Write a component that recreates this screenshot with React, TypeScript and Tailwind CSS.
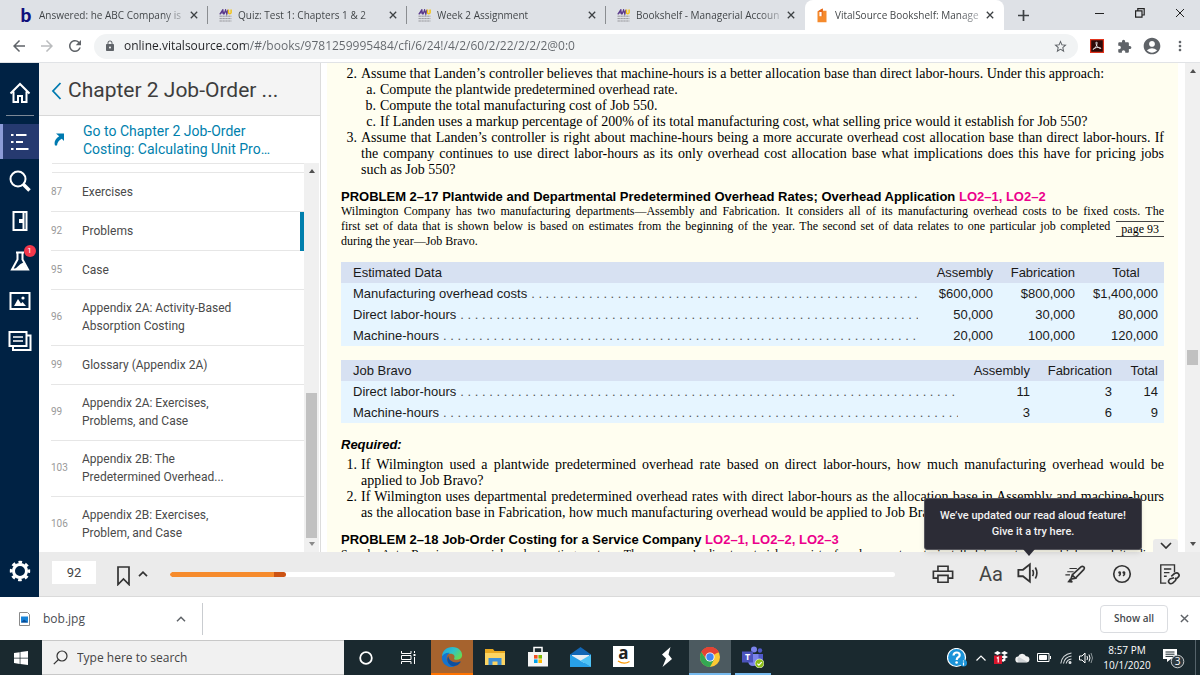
import type { ReactNode } from "react";
import {
  MdArrowBack,
  MdArrowForward,
  MdRefresh,
  MdLock,
  MdStarBorder,
  MdExtension,
  MdAccountCircle,
  MdMoreVert,
} from "react-icons/md";

/* ---------- Browser chrome ---------- */

function CrossIcon({ className }: { className: string }) {
  return (
    <svg viewBox="0 0 10 10" className={className} fill="none" stroke="currentColor" strokeWidth="1.6">
      <path d="M1 1l8 8M9 1l-8 8" />
    </svg>
  );
}

function BrandB() {
  return (
    <span className="font-['Lato'] text-[19px] leading-[18px] font-black text-[#10107c]" aria-hidden="true">
      b
    </span>
  );
}

function UniversityIcon() {
  return (
    <svg viewBox="0 0 13 13" className="h-[13px] w-[13px]" fill="none">
      <path d="M.8 5.300 3.800.8l.8 4.500M1.800 3.800h2.800M5 5.300 6.600 1l1.200 4L9 .8" stroke="#5b3a8c" strokeWidth="1.300" />
      <path d="M9.500.4v3.200q0 1.200 1.200 1.200t1.400-1.200V.4" stroke="#f2c318" strokeWidth="1.500" />
      <path d="M.5 7.200h12M.5 9.600h12M.5 12h12" stroke="#97979c" strokeWidth="1" strokeDasharray="2.400 .5" />
    </svg>
  );
}

function BookshelfIcon() {
  return (
    <svg viewBox="0 0 10 15" className="h-[15px] w-[10px]">
      <path d="M.5 3.400 5 .8h1v2h3.500v11.500h-9z" fill="#f58a2c" />
      <path d="M.5 3.400 5.600.6v8L2.800 7.200V3.600z" fill="#e2631b" />
      <path d="M2.400 4h2.200v4.200H2.400z" fill="#fff" />
    </svg>
  );
}

const tabs = [
  { title: "Answered: he ABC Company is", icon: <BrandB />, divider: true },
  { title: "Quiz: Test 1: Chapters 1 & 2", icon: <UniversityIcon />, divider: true },
  { title: "Week 2 Assignment", icon: <UniversityIcon />, divider: true },
  { title: "Bookshelf - Managerial Accoun", icon: <UniversityIcon />, divider: false },
  { title: "VitalSource Bookshelf: Manage", icon: <BookshelfIcon />, active: true, divider: false },
];

function TabStrip() {
  return (
    <div className="flex h-[30px] shrink-0 items-stretch bg-[#dee1e6] pl-[9px]">
      {tabs.map((tab) => (
        <div
          key={tab.title}
          className={
            tab.active
              ? "relative flex w-[199px] shrink-0 items-center rounded-t-lg bg-white px-2.5"
              : "relative flex w-[199px] shrink-0 items-center px-2.5"
          }
        >
          <span className="flex w-3.5 shrink-0 justify-center">{tab.icon}</span>
          <button className="ml-1.5 min-w-0 flex-1 overflow-hidden bg-gradient-to-r from-[#3c4043] from-85% to-[#b9bcc1] bg-clip-text text-left text-[10px] whitespace-nowrap text-transparent">
            {tab.title}
          </button>
          <button aria-label="Close tab" className="ml-1.5 shrink-0 text-[#3c4043]">
            <CrossIcon className="h-2 w-2" />
          </button>
          {tab.divider && <span className="absolute right-0 h-[18px] w-px bg-[#8a8d91]" />}
        </div>
      ))}
      <button aria-label="New tab" className="ml-[14px] text-[#3c4043]">
        <svg viewBox="0 0 11 11" className="h-[11px] w-[11px]" stroke="currentColor" strokeWidth="1.700">
          <path d="M5.500 0v11M0 5.500h11" />
        </svg>
      </button>
      <div className="mr-[15px] ml-auto flex items-center gap-[30px] pb-1 text-[#222]">
        <button aria-label="Minimize">
          <svg viewBox="0 0 10 10" className="h-2.5 w-2.5" stroke="currentColor">
            <path d="M0 5.500h9" />
          </svg>
        </button>
        <button aria-label="Restore">
          <svg viewBox="0 0 10 10" className="h-2.5 w-2.5" fill="none" stroke="currentColor" strokeWidth="1.200">
            <path d="M.6 2.800h6.400v6.400H.6zM2.800 2.600V.6h6.400V7H7.200" />
          </svg>
        </button>
        <button aria-label="Close">
          <CrossIcon className="h-2.5 w-2.5 stroke-1" />
        </button>
      </div>
    </div>
  );
}

function AcrobatIcon() {
  return (
    <svg viewBox="0 0 14 14" className="h-[14px] w-[14px]" fill="none">
      <path d="M.6.6h12.800v12.800H.6z" fill="#2d0a08" stroke="#e2341d" strokeWidth="1.200" />
      <path
        d="M6.400 3c1.400-.3.6 3.200-.9 5.400-1 1.600-2.200 2.500-2.400 1.900-.2-.8 2.800-1.900 5.200-1.900 1.800 0 2.900.5 2.400 1.100-.9.6-3.400-1.600-4.200-3.400C5.900 4.700 5.800 3.200 6.400 3z"
        stroke="#fff"
        strokeWidth=".8"
      />
    </svg>
  );
}

function AddressBar() {
  return (
    <div className="flex h-[33px] shrink-0 items-center border-b border-[#e1e3e6] bg-white pr-3">
      <button aria-label="Back" className="ml-[10px] text-[#5f6368]">
        <MdArrowBack className="h-[18px] w-[18px]" />
      </button>
      <button aria-label="Forward" className="ml-[10px] text-[#babcbe]">
        <MdArrowForward className="h-[18px] w-[18px]" />
      </button>
      <button aria-label="Reload" className="ml-[10px] text-[#5f6368]">
        <MdRefresh className="h-[18px] w-[18px]" />
      </button>
      <div className="mr-3 ml-[10px] flex h-[25px] flex-1 items-center rounded-full bg-[#f1f3f4] pr-2.5 pl-2.5">
        <MdLock className="h-3 w-3 text-[#5f6368]" />
        <input
          aria-label="Address"
          defaultValue="online.vitalsource.com/#/books/9781259995484/cfi/6/24!/4/2/60/2/22/2/2/2@0:0"
          className="ml-2 flex-1 bg-gradient-to-r from-[#202124] from-[121px] to-[#62666b] to-[121px] bg-clip-text text-xs text-transparent outline-none"
        />
        <button aria-label="Bookmark this page" className="text-[#5f6368]">
          <MdStarBorder className="h-[15px] w-[15px]" />
        </button>
      </div>
      <button aria-label="Adobe Acrobat">
        <AcrobatIcon />
      </button>
      <button aria-label="Extensions" className="ml-[13px] text-[#5f6368]">
        <MdExtension className="h-[15px] w-[15px]" />
      </button>
      <button aria-label="Profile" className="ml-[10px] text-[#5f6368]">
        <MdAccountCircle className="h-5 w-5" />
      </button>
      <button aria-label="Menu" className="ml-2.5 text-[#5f6368]">
        <MdMoreVert className="h-4 w-4" />
      </button>
    </div>
  );
}

/* ---------- Left icon rail ---------- */

function RailIcon({ children, className = "h-6 w-6" }: { children: ReactNode; className?: string }) {
  return (
    <svg viewBox="0 0 24 24" className={className} fill="none" stroke="#fff" strokeWidth="2">
      {children}
    </svg>
  );
}

function Rail() {
  return (
    <nav aria-label="Reader" className="flex w-[39px] shrink-0 flex-col items-center bg-[#002244]">
      <button aria-label="Home" className="mt-[18px]">
        <RailIcon>
          <path d="M2.500 12.500 12 3l9.500 9.500M5.500 10.500v10.500h4.500v-6h4v6h4.500V10.500" />
        </RailIcon>
      </button>
      <span className="mt-[10px] h-px w-7 bg-[#7c8896]" />
      <button
        aria-label="Table of contents"
        className="mt-2 flex h-[35px] w-full items-center justify-center border-l-3 border-[#8c9bd8] bg-[#263a70] pr-0.5"
      >
        <RailIcon>
          <path d="M8 5h10.500M8 12h7M8 19h12.500M3 5h2.500M3 12h2.500M3 19h2.500" />
        </RailIcon>
      </button>
      <button aria-label="Search" className="mt-[10px]">
        <RailIcon>
          <circle cx="10" cy="10" r="7.500" />
          <path d="m15 15 6.500 6.500" strokeWidth="3.500" />
        </RailIcon>
      </button>
      <button aria-label="Notebook" className="mt-4">
        <RailIcon>
          <path d="M5.500 3h13v18h-13zM15.500 3v18" />
          <path d="M11 12h5" strokeWidth="4" />
        </RailIcon>
      </button>
      <button aria-label="Study tools" className="relative mt-4">
        <RailIcon>
          <path d="M8 3.500h8M9.500 4v6.500L4 20.500h16L14.500 10.500V4" />
          <path d="m7 20 5.500-5 3-1.500 4 7z" fill="#fff" stroke="none" />
        </RailIcon>
        <span className="absolute -top-1 left-4 flex h-3 w-3 items-center justify-center rounded-full bg-[#f4374b] font-['Roboto'] text-[8px] text-white">
          1
        </span>
      </button>
      <button aria-label="Figures" className="mt-4">
        <RailIcon>
          <path d="M2.500 4h19v16h-19z" />
          <path d="m6 17 4-7 3 4.500 1.500-1.500 3.500 4z" fill="#fff" stroke="none" />
          <circle cx="15" cy="9" r="1.600" fill="#fff" stroke="none" />
        </RailIcon>
      </button>
      <button aria-label="Flashcards" className="mt-4">
        <RailIcon>
          <path d="M1.500 3h17v14h-17zM19 6.500h3.500V21H5v-3.500" />
          <path d="M5 8h10M5 12h10" strokeWidth="1.400" />
        </RailIcon>
      </button>
      <button aria-label="Settings" className="mt-auto mb-[14px]">
        <RailIcon>
          <circle cx="12" cy="12" r="6.500" strokeWidth="3" />
          <circle cx="12" cy="12" r="8.800" strokeWidth="2.800" strokeDasharray="3.600 3.311" strokeDashoffset="1.800" />
        </RailIcon>
      </button>
    </nav>
  );
}

/* ---------- Contents panel ---------- */

const chapters = [
  { page: 87, title: "Exercises" },
  { page: 92, title: "Problems", current: true },
  { page: 95, title: "Case" },
  { page: 96, title: "Appendix 2A: Activity-Based Absorption Costing" },
  { page: 99, title: "Glossary (Appendix 2A)" },
  { page: 99, title: "Appendix 2A: Exercises, Problems, and Case" },
  { page: 103, title: "Appendix 2B: The Predetermined Overhead..." },
  { page: 106, title: "Appendix 2B: Exercises, Problem, and Case" },
];

function Contents() {
  return (
    <aside className="flex w-[282px] shrink-0 flex-col border-r border-[#dcdcdc] bg-white font-['Roboto'] text-[#4a4a4a]">
      <div className="flex h-[53px] shrink-0 items-center border-b border-[#d8d8d8] bg-[#f4f4f4] pt-[3px] pl-3">
        <button aria-label="Back" className="mr-1.5">
          <svg viewBox="0 0 10 18" className="h-[18px] w-[11px]" fill="none" stroke="#007ab0" strokeWidth="1.800">
            <path d="M9 1 1.500 9 9 17" />
          </svg>
        </button>
        <h1 className="text-[21px] whitespace-nowrap text-[#3d3d3d]">Chapter 2 Job-Order ...</h1>
      </div>
      <a href="#chapter-2" className="flex h-[47px] shrink-0 items-center pl-[15px] text-sm leading-[18px] text-[#007fad]">
        <svg viewBox="0 0 10 13" className="mr-[19px] h-[13px] w-[10px] shrink-0" fill="#007ab0">
          <path d="M2 .5h8v7.500L7.800 5.800Q3.500 8 3 12.500H1Q-.8 7 5.200 3.200z" />
        </svg>
        <span>
          Go to Chapter 2 Job-Order
          <br />
          Costing: Calculating Unit Pro…
        </span>
      </a>
      <div className="flex min-h-0 flex-1">
        <ul className="flex-1 overflow-hidden">
          <li className="ml-[13px] h-[10px] border-y border-[#e6e6e6]" />
          {chapters.map((c) => (
            <li key={c.title} className={c.current ? "flex border-r-4 border-[#007fad]" : "flex"}>
              <a
                href={"#page-" + c.page}
                className="ml-3 flex min-h-[39px] flex-1 items-center border-b border-[#e6e6e6] pt-[9px] pb-2.5 text-xs leading-[18px]"
              >
                <span className="w-[31px] text-[10px] text-[#999]">{c.page}</span>
                <span className="w-[160px]">{c.title}</span>
              </a>
            </li>
          ))}
        </ul>
        <div className="flex w-[15px] flex-col items-center bg-[#f0f0f0] py-1.5">
          <svg viewBox="0 0 6 4" className="h-1 w-1.5 shrink-0" fill="#505050">
            <path d="M0 4 3 0l3 4z" />
          </svg>
          <span className="mt-auto h-[145px] w-[11px] bg-[#c1c1c1]" />
          <svg viewBox="0 0 6 4" className="mt-1 h-1 w-1.5 shrink-0" fill="#8a8a8a">
            <path d="M0 0l3 4 3-4z" />
          </svg>
        </div>
        <span className="w-px" />
      </div>
    </aside>
  );
}

/* ---------- Book page ---------- */

function Item({ label, nested, children }: { label: string; nested?: boolean; children: ReactNode }) {
  return (
    <li className="flex gap-1">
      <span className={nested ? "w-[15px] shrink-0 text-right" : "w-4 shrink-0 text-right"}>{label}</span>
      <div className="flex-1 text-justify">{children}</div>
    </li>
  );
}

function ProblemHeading({ title, objectives }: { title: string; objectives: string }) {
  return (
    <h2 className="mt-[11px] font-['Liberation_Sans'] text-[13px] leading-[15px] font-bold">
      {title} <span className="text-[#ec008c]">{objectives}</span>
    </h2>
  );
}

function FullLine({ children }: { children: ReactNode }) {
  return <span className="block flex-1 [text-align-last:justify]">{children}</span>;
}

type Row = { label: string; dots: number; values: string[] };

function DataTable({
  head,
  rows,
  widths,
  lastHead,
}: {
  head: string[];
  rows: Row[];
  widths: string[];
  lastHead: string;
}) {
  return (
    <table className="w-full table-fixed font-['Liberation_Sans'] text-[13px] leading-[21px] text-[#1a1a1a]">
      <thead className="bg-[#d7e1f2]">
        <tr>
          <th scope="col" className="pl-3 text-left font-normal">
            {head[0]}
          </th>
          {head.slice(1).map((h, i) => (
            <th
              key={h}
              scope="col"
              className={i === 2 ? `${widths[i]} ${lastHead} pr-1.5 font-normal` : `${widths[i]} text-right font-normal`}
            >
              {h}
            </th>
          ))}
        </tr>
      </thead>
      <tbody className="bg-[#e6f5ff]">
        {rows.map((r) => (
          <tr key={r.label}>
            <th scope="row" className="pl-3 text-left font-normal">
              <div className="flex gap-1 overflow-hidden whitespace-nowrap">
                {r.label}
                <span aria-hidden="true" className="min-w-0 flex-1 text-[#555]">
                  {". ".repeat(r.dots)}
                </span>
              </div>
            </th>
            {r.values.map((v, i) => (
              <td key={i} className={i === 2 ? "pr-1.5 text-right" : "text-right"}>
                {v}
              </td>
            ))}
          </tr>
        ))}
      </tbody>
    </table>
  );
}

function BookPage() {
  return (
    <article className="min-w-0 flex-1 overflow-hidden bg-[#fffef0] px-[14px] pt-[3px] font-['Liberation_Serif'] text-sm leading-4 text-black">
      <ol>
        <Item label="2.">
          Assume that Landen’s controller believes that machine-hours is a better allocation base than direct
          labor-hours. Under this approach:
          <ol>
            <Item nested label="a.">
              Compute the plantwide predetermined overhead rate.
            </Item>
            <Item nested label="b.">
              Compute the total manufacturing cost of Job 550.
            </Item>
            <Item nested label="c.">
              If Landen uses a markup percentage of 200% of its total manufacturing cost, what selling price would it
              establish for Job 550?
            </Item>
          </ol>
        </Item>
        <Item label="3.">
          Assume that Landen’s controller is right about machine-hours being a more accurate overhead cost allocation
          base than direct labor-hours. If the company continues to use direct labor-hours as its only overhead cost
          allocation base what implications does this have for pricing jobs such&nbsp;as&nbsp;Job&nbsp;550?
        </Item>
      </ol>

      <ProblemHeading
        title="PROBLEM 2–17 Plantwide and Departmental Predetermined Overhead Rates; Overhead Application"
        objectives="LO2–1, LO2–2"
      />
      <div className="text-xs leading-[15px]">
        <FullLine>
          Wilmington Company has two manufacturing departments—Assembly and Fabrication. It considers all of its
          manufacturing overhead costs to be fixed costs. The
        </FullLine>
        <div className="flex h-[15px] items-start gap-1.5">
          <FullLine>
            first set of data that is shown below is based on estimates from the beginning of the year. The second set of
            data relates to one particular job completed
          </FullLine>
          <span className="mt-0.5 border-y border-[#444] px-[5px] leading-[14px]">page 93</span>
        </div>
        during the year—Job Bravo.
      </div>

      <div className="mt-[13px] flex flex-col gap-[14px]">
        <DataTable
          head={["Estimated Data", "Assembly", "Fabrication", "Total"]}
          widths={["w-[75px]", "w-[82px]", "w-[89px]"]}
          lastHead="pl-[19px] text-center"
          rows={[
            { label: "Manufacturing overhead costs", dots: 54, values: ["$600,000", "$800,000", "$1,400,000"] },
            { label: "Direct labor-hours", dots: 64, values: ["50,000", "30,000", "80,000"] },
            { label: "Machine-hours", dots: 66, values: ["20,000", "100,000", "120,000"] },
          ]}
        />
        <DataTable
          head={["Job Bravo", "Assembly", "Fabrication", "Total"]}
          widths={["w-[72px]", "w-[82px]", "w-[52px]"]}
          lastHead="text-right"
          rows={[
            { label: "Direct labor-hours", dots: 69, values: ["11", "3", "14"] },
            { label: "Machine-hours", dots: 72, values: ["3", "6", "9"] },
          ]}
        />
      </div>

      <h3 className="mt-[14px] mb-[5px] font-['Liberation_Sans'] text-[13px] leading-[15px] font-bold italic">
        Required:
      </h3>
      <ol>
        <Item label="1.">
          If Wilmington used a plantwide predetermined overhead rate based on direct labor-hours, how much manufacturing
          overhead would be applied&nbsp;to&nbsp;Job&nbsp;Bravo?
        </Item>
        <Item label="2.">
          If Wilmington uses departmental predetermined overhead rates with direct labor-hours as the allocation base in
          Assembly and machine-hours as the allocation base in Fabrication, how much manufacturing overhead would be
          applied to Job Bravo?
        </Item>
      </ol>
      <ProblemHeading title="PROBLEM 2–18 Job-Order Costing for a Service Company" objectives="LO2–1, LO2–2, LO2–3" />
      <div className="text-xs leading-[15px]">
        <FullLine>
          Speedy Auto Repairs uses a job-order costing system. The company’s direct materials consist of replacement
          parts installed in customer vehicles, and its direct
        </FullLine>
      </div>
    </article>
  );
}

function PageScrollbar() {
  return (
    <div className="ml-[7px] flex w-[15px] shrink-0 flex-col items-center bg-[#f0f0f0] py-1.5">
      <svg viewBox="0 0 6 4" className="h-1 w-1.5" fill="#505050">
        <path d="M0 4 3 0l3 4z" />
      </svg>
      <span className="h-[277px]" />
      <span className="h-[15px] w-[11px] bg-[#c1c1c1]" />
      <svg viewBox="0 0 6 4" className="mt-auto h-1 w-1.5" fill="#505050">
        <path d="M0 0l3 4 3-4z" />
      </svg>
    </div>
  );
}

/* ---------- Reader footer ---------- */

function ToolIcon({ children }: { children: ReactNode }) {
  return (
    <svg viewBox="0 0 24 24" className="h-[22px] w-[22px]" fill="none" stroke="#333" strokeWidth="1.800">
      {children}
    </svg>
  );
}

function ReaderFooter() {
  return (
    <div className="relative flex h-[45px] shrink-0 items-center border-b border-[#dadada] bg-[#ebebeb] pr-[20px] pl-[13px] font-['Roboto']">
      <input
        aria-label="Page"
        defaultValue="92"
        className="mb-1 h-[23px] w-11 bg-white text-center text-[13px] text-[#444] outline-none"
      />
      <button aria-label="Bookmark" className="mt-1 ml-[21px]">
        <svg viewBox="0 0 13 20" className="h-5 w-[13px]" fill="none" stroke="#333" strokeWidth="1.700">
          <path d="M1 1h11v17.500l-5.500-5.500L1 18.500z" />
        </svg>
      </button>
      <button aria-label="Bookmark list" className="ml-2">
        <svg viewBox="0 0 10 6" className="h-1.5 w-2.5" fill="none" stroke="#333" strokeWidth="1.700">
          <path d="M1 5.200 5 1.200l4 4" />
        </svg>
      </button>
      <div className="ml-[22px] h-[5px] max-w-[725px] flex-1 overflow-hidden rounded-full bg-white">
        <div className="h-full w-[16%] rounded-full bg-gradient-to-r from-[#f68b2c] from-90% to-[#cc5314] to-90%" />
      </div>
      <div className="ml-auto flex items-center pl-[36px]">
        <button aria-label="Print">
          <ToolIcon>
            <path d="M6.500 9V3.500h11V9M6.500 16.500H1.500V9h21v7.500H17.500M6.500 13.500h11v7.500h-11z" />
          </ToolIcon>
        </button>
        <button aria-label="Text size" className="ml-[25px] text-xl text-[#444]">
          Aa
        </button>
        <div className="relative ml-[14px] flex">
          <button aria-label="Read aloud" className="mb-0.5">
            <ToolIcon>
              <path d="M1.500 8.500h5L14 2.500v19l-7.500-6h-5z" strokeWidth="2" />
              <path d="M17 8.500q1.800 3.500 0 7M20 6q3.400 6 0 12" />
            </ToolIcon>
          </button>
          <div
            role="tooltip"
            className="absolute bottom-[36px] -left-[93px] w-[218px] rounded-[3px] border border-[#55555c] bg-[#2c2c36] py-[9px] text-center text-[11px] leading-4 font-medium text-[#f2f2f2] shadow-md"
          >
            We’ve updated our read aloud feature!
            <br />
            Give it a try here.
            <span className="absolute -bottom-[7px] left-[98px] border-x-[6px] border-t-[7px] border-x-transparent border-t-[#2c2c36]" />
          </div>
        </div>
        <button aria-label="Highlighter" className="ml-[25px]">
          <ToolIcon>
            <path d="m9 13 9.500-8.800q1.500-1.200 3 0t0 3L12.500 16.500M9 13l-1.500 4.500L12.500 16.500z" />
            <path d="M6 6h8M3.500 9.500h7M1.500 13h5" strokeWidth="1.200" />
            <path d="m3.500 21 3-4 3 3-.5 1.500z" fill="#333" stroke="none" />
          </ToolIcon>
        </button>
        <button aria-label="Citation" className="ml-[25px]">
          <ToolIcon>
            <circle cx="12" cy="12" r="9" />
            <path d="M10.300 10.500q.6 2-1.800 3.500M14.900 10.500q.6 2-1.800 3.500" strokeWidth="1.500" />
            <circle cx="9.400" cy="10.400" r="1.500" fill="#333" stroke="none" />
            <circle cx="14" cy="10.400" r="1.500" fill="#333" stroke="none" />
          </ToolIcon>
        </button>
        <button aria-label="Copy link" className="ml-[25px]">
          <ToolIcon>
            <path d="M9 22H3V2h15v8M6.500 6.500h8M6.500 10.500h6M6.500 14.500h3" strokeWidth="1.500" />
            <path d="m14.500 14.500 3.500-3q3-1.500 4.500.5t-1 4l-2.500 2M17.500 16l-4.500 1.500q-2.500 2-1 4t4 .5l3-2.800q1-1.700-.3-3.200" />
          </ToolIcon>
        </button>
      </div>
      <button
        aria-label="Hide toolbar"
        className="absolute right-[22px] bottom-[44px] flex h-[13px] w-[25px] items-center justify-center rounded-t-[3px] bg-[#ebebeb]"
      >
        <svg viewBox="0 0 12 7" className="h-[7px] w-3" fill="none" stroke="#333" strokeWidth="1.700">
          <path d="m1 1 5 5 5-5" />
        </svg>
      </button>
    </div>
  );
}

/* ---------- Downloads and taskbar ---------- */

function Downloads() {
  return (
    <div className="flex h-[43px] shrink-0 items-center bg-white pr-[11px]">
      <div className="flex h-8 w-[203px] items-center border-r border-[#c9ccd0] pl-[19px]">
        <svg viewBox="0 0 11 14" className="h-3.5 w-[11px]">
          <path d="M.5.5h8l2 2v11H.5z" fill="#fff" stroke="#8a8a8a" />
          <path d="M2 4.500h7v6H2z" fill="#1683d8" />
          <path d="m2 10.500 3-3 4 3z" fill="#0a4b94" />
        </svg>
        <button className="ml-[13px] text-xs text-[#4a4d52]">bob.jpg</button>
        <button aria-label="More options" className="mr-4 ml-auto">
          <svg viewBox="0 0 10 6" className="h-1.5 w-2.5" fill="none" stroke="#5f6368" strokeWidth="1.500">
            <path d="M1 5.200 5 1.200l4 4" />
          </svg>
        </button>
      </div>
      <button className="ml-auto h-7 w-[68px] rounded border border-[#dadce0] text-[10px] font-semibold text-[#45494d]">
        Show all
      </button>
      <button aria-label="Close downloads" className="ml-3 text-[#5f6368]">
        <CrossIcon className="h-[9px] w-[9px]" />
      </button>
    </div>
  );
}

function EdgeIcon() {
  return (
    <svg viewBox="0 0 24 24" className="h-[22px] w-[22px]">
      <defs>
        <linearGradient id="edge-top" x1="0" y1="0" x2="1" y2=".6">
          <stop offset="0" stopColor="#1c9fe0" />
          <stop offset=".55" stopColor="#2fc3c8" />
          <stop offset="1" stopColor="#63d957" />
        </linearGradient>
      </defs>
      <path
        d="M1 12C1 5.500 6 1 12.500 1S23.500 5.500 23 10.500c-.3 3-3 4.500-6 4.500-2.500 0-3.300-.8-2.500-2 1-2-.6-4.500-4-4.500C6 8.500 1.500 10 1 12z"
        fill="url(#edge-top)"
      />
      <path d="M1 12c.8-3 4.500-5 8.500-4.500-3 1.500-4 4.500-3 8 1.200 4 4.500 6.500 8.500 7C8 24.500.5 19.500 1 12z" fill="#1374cf" />
      <path d="M8 11c-2 3-1.500 7.500 2.500 10.200 4.500 2.300 9-.4 11-3.700.2-.6-.3-.8-.8-.5-5.700 2.700-12.500-.5-12.700-6z" fill="#0c4fa0" />
    </svg>
  );
}

function ExplorerIcon() {
  return (
    <svg viewBox="0 0 20 18" className="h-[18px] w-5">
      <path d="M0 1h8l1.500 2H20v14H0z" fill="#e8a820" />
      <path d="M0 5h20v12H0z" fill="#fcd462" />
      <path d="M3.500 17v-7h13v7h-4v-3.500h-5V17z" fill="#3d8fd8" />
    </svg>
  );
}

function StoreIcon() {
  return (
    <svg viewBox="0 0 20 21" className="h-[21px] w-5">
      <path d="M6 6V1.500h8V6" fill="none" stroke="#fff" strokeWidth="1.500" />
      <path d="M0 6h20v14.500H0z" fill="#f5f5f5" />
      <path d="M6 9h3.600v3.600H6z" fill="#f25022" />
      <path d="M10.400 9H14v3.600h-3.600z" fill="#7fba00" />
      <path d="M6 13.400h3.600V17H6z" fill="#00a4ef" />
      <path d="M10.400 13.400H14V17h-3.600z" fill="#ffb900" />
    </svg>
  );
}

function MailIcon() {
  return (
    <svg viewBox="0 0 21 20" className="h-5 w-[21px]">
      <path d="M0 7.500 10.500 0 21 7.500V20H0z" fill="#1266b5" />
      <path d="M2 8h17v8H2z" fill="#e8eef4" />
      <path d="m0 7.500 21 12.500H0z" fill="#28a0e8" />
      <path d="M21 7.500V20L10.500 13.700z" fill="#4fc3f7" />
    </svg>
  );
}

function AmazonIcon() {
  return (
    <span className="relative flex h-[21px] w-[21px] justify-center bg-white font-['Open_Sans'] text-[17px] leading-[14px] font-bold text-[#222]">
      a
      <svg viewBox="0 0 14 5" className="absolute bottom-0.5 h-[5px] w-3.5" fill="none" stroke="#ff9900" strokeWidth="1.400">
        <path d="M1 1q6 4 11.500.5" />
      </svg>
    </span>
  );
}

function BoltIcon() {
  return (
    <svg viewBox="0 0 12 20" className="h-5 w-3" fill="#fff">
      <path d="M9.500 0 1 7.500l4 4L1.500 20 11 12 7.500 7.500z" />
    </svg>
  );
}

function ChromeIcon() {
  return (
    <svg viewBox="0 0 20 20" className="h-5 w-5">
      <circle cx="10" cy="10" r="10" fill="#fcc934" />
      <path d="M10 10 1.340 5A10 10 0 0 1 18.660 5z" fill="#e54335" />
      <path d="M10 5.500h8.930A10 10 0 0 0 1.340 5l4.700 7z" fill="#e54335" />
      <path d="M1.340 5A10 10 0 0 0 10 20l4-7.600-4 2-4-2.200z" fill="#34a853" />
      <circle cx="10" cy="10" r="4.600" fill="#fff" />
      <circle cx="10" cy="10" r="3.700" fill="#4285f4" />
    </svg>
  );
}

function TeamsIcon() {
  return (
    <svg viewBox="0 0 22 22" className="h-[22px] w-[22px]">
      <circle cx="12" cy="3.500" r="3" fill="#7b83eb" />
      <circle cx="18" cy="4.500" r="2.200" fill="#5059c9" />
      <path d="M13 8h8v6q-1 4-5 4z" fill="#5059c9" />
      <path d="M6 8h10.500v7q-1 5-5.500 5t-5-5z" fill="#7b83eb" />
      <path d="M0 5.500h11v11H0z" fill="#4b53bc" />
      <text x="5.500" y="14" fontSize="9" fontWeight="700" fill="#fff" textAnchor="middle" fontFamily="Open Sans">
        T
      </text>
      <circle cx="17.500" cy="17.500" r="4.500" fill="#8cbd18" stroke="#fff" strokeWidth=".6" />
      <path d="m15.300 17.600 1.600 1.600 2.800-3" fill="none" stroke="#fff" strokeWidth="1.200" />
    </svg>
  );
}

const apps = [
  { name: "Edge", icon: <EdgeIcon />, className: "w-[42px] border-b-2 border-[#ff7300] bg-[#a6632e]" },
  { name: "File Explorer", icon: <ExplorerIcon />, className: "w-[43px] border-b-2 border-transparent" },
  { name: "Microsoft Store", icon: <StoreIcon />, className: "w-[43px] border-b-2 border-transparent" },
  { name: "Mail", icon: <MailIcon />, className: "w-[43px] border-b-2 border-transparent" },
  { name: "Amazon", icon: <AmazonIcon />, className: "w-[43px] border-b-2 border-transparent" },
  { name: "Bolt", icon: <BoltIcon />, className: "w-[44px] border-b-2 border-transparent" },
  { name: "Chrome", icon: <ChromeIcon />, className: "w-[42px] border-b-2 border-[#76b9ed] bg-[#4c5a60]" },
  { name: "Teams", icon: <TeamsIcon />, className: "ml-1 w-9 border-b-2 border-[#76b9ed]" },
];

function Taskbar() {
  return (
    <div className="flex h-[35px] shrink-0 items-stretch bg-[#1a292f] text-white">
      <button aria-label="Start" className="flex w-[42px] shrink-0 items-center justify-center">
        <svg viewBox="0 0 14 14" className="h-3.5 w-3.5" fill="#fff">
          <path d="M0 2l5.700-.8v5.500H0zM6.400 1.100 14 0v6.700H6.400zM0 7.400h5.700v5.500L0 12zM6.400 7.400H14V14l-7.600-1.100z" />
        </svg>
      </button>
      <label className="flex w-[302px] shrink-0 items-center border-y border-[#c8c8c8] bg-[#f1f1f1] pl-[11px]">
        <svg viewBox="0 0 15 15" className="h-[15px] w-[15px]" fill="none" stroke="#333" strokeWidth="1.200">
          <circle cx="9" cy="6" r="5" />
          <path d="M5.500 9.500.8 14.200" />
        </svg>
        <input
          type="text"
          aria-label="Search"
          placeholder="Type here to search"
          className="ml-[9px] min-w-0 flex-1 bg-transparent text-xs text-[#333] outline-none placeholder:text-[#444]"
        />
      </label>
      <button aria-label="Cortana" className="flex w-[43px] items-center justify-center">
        <svg viewBox="0 0 14 14" className="h-3.5 w-3.5" fill="none" stroke="#fff" strokeWidth="1.800">
          <circle cx="7" cy="7" r="5.800" />
        </svg>
      </button>
      <button aria-label="Task view" className="mr-[2px] flex w-[42px] items-center justify-center">
        <svg viewBox="0 0 15 13" className="h-[13px] w-[15px]" fill="none" stroke="#fff">
          <path d="M.5 0v2.500h9.500V0M.5 4.500h9.500v4H.5zM.5 13v-2.500h9.500V13M13.500 0v2M13.500 6v7" />
          <path d="M12.500 4h2" strokeWidth="2" />
        </svg>
      </button>
      {apps.map((app) => (
        <button
          key={app.name}
          aria-label={app.name}
          className={`flex shrink-0 items-center justify-center ${app.className}`}
        >
          {app.icon}
        </button>
      ))}
      <div className="ml-auto flex items-center">
        <button aria-label="Help" className="mr-[9px]">
          <svg viewBox="0 0 20 20" className="h-5 w-5">
            <circle cx="9.500" cy="9.500" r="9" fill="#1b93d8" stroke="#fff" strokeWidth="1.200" />
            <path d="M6.500 7.500q.3-3 3.200-3t3 2.500q0 1.500-1.500 2.300T9.700 12" fill="none" stroke="#fff" strokeWidth="2.200" />
            <circle cx="9.600" cy="14.500" r="1.300" fill="#fff" />
            <circle cx="16.500" cy="15" r="3.500" fill="#1b93d8" />
            <path d="M16.500 12.500v1M16.500 14.500v3" stroke="#fff" strokeWidth="1.200" />
          </svg>
        </button>
        <button aria-label="Show hidden icons" className="mr-2">
          <svg viewBox="0 0 10 6" className="h-1.5 w-2.5" fill="none" stroke="#fff" strokeWidth="1.200">
            <path d="M.5 5.500 5 1l4.500 4.500" />
          </svg>
        </button>
        <button aria-label="Dropbox" className="mr-[7px]">
          <svg viewBox="0 0 14 13" className="h-[13px] w-3.5">
            <path
              d="m3.500 0 3.500 2-3.500 2L0 2zM10.500 0 14 2l-3.500 2L7 2zM10.500 4 14 6l-3.500 2L7 6zM7 9l3-1.500L12 9l-3 2z"
              fill="#fff"
            />
            <path d="M0 4.500h8V13H0z" fill="#d9152c" />
            <path d="M2.800 7.200 4.200 6.200V11.500" fill="none" stroke="#fff" strokeWidth="1.100" />
          </svg>
        </button>
        <button aria-label="OneDrive" className="mr-[7px]">
          <svg viewBox="0 0 15 10" className="h-2.5 w-[15px]">
            <path d="M3.500 9.500a3 3 0 0 1-.3-6 4.200 4.200 0 0 1 7.800-.3 3.200 3.200 0 0 1 1 6.300z" fill="#f1f1f1" />
            <path d="m4 4 8.500 5H3.500a3 3 0 0 1 .5-5z" fill="#cfd3d6" />
          </svg>
        </button>
        <button aria-label="Battery" className="mr-[9px]">
          <svg viewBox="0 0 14 9" className="h-[9px] w-3.5" fill="none" stroke="#fff">
            <path d="M.5.5h11.500v8H.5zM13.500 3v3" />
            <path d="M2.500 2.500h7v4h-7z" fill="#fff" />
          </svg>
        </button>
        <button aria-label="Network" className="mr-[7px]">
          <svg viewBox="0 0 12 12" className="h-3 w-3" fill="none" stroke="#d8dcde" strokeWidth="1.100">
            <path d="M.8 11.500Q2 2.500 11.500 1M3.500 11.500Q4.500 5 11.500 4M6.200 11.500Q7 7.500 11.500 7" />
            <circle cx="10" cy="10.500" r="1" fill="#fff" />
          </svg>
        </button>
        <button aria-label="Volume">
          <svg viewBox="0 0 14 12" className="h-3 w-3.5" fill="none" stroke="#fff">
            <path d="M.5 4h2.500L6 1v10L3 8H.5zM8 4q1 2 0 4M10 2.500q2 3.500 0 7" />
            <path d="M12 1q3 5 0 10" stroke="#8b9599" />
          </svg>
        </button>
        <button className="ml-1.5 w-[56px] text-center text-[10px] leading-[15px]">
          8:57 PM
          <br />
          10/1/2020
        </button>
        <button aria-label="Notifications" className="relative mr-[10px] ml-2">
          <svg viewBox="0 0 22 22" className="h-[22px] w-[22px]">
            <path d="M0 2h14v10H8l-4 3v-3H0z" fill="#fff" />
            <path d="M2.500 5h9M2.500 7.200h9M2.500 9.400h9" stroke="#1a292f" />
            <circle cx="14.500" cy="14.500" r="6.300" fill="#2e3a3f" stroke="#c8ccce" />
            <text x="14.500" y="18" fontSize="10" fill="#fff" textAnchor="middle" fontFamily="Open Sans">
              3
            </text>
          </svg>
        </button>
        <span className="mr-1 h-full w-px bg-[#55636a]" />
      </div>
    </div>
  );
}

export default function App() {
  return (
    <div className="flex h-screen flex-col overflow-hidden bg-white font-['Open_Sans',sans-serif]">
      <TabStrip />
      <AddressBar />
      <div className="flex min-h-0 flex-1">
        <Rail />
        <div className="flex min-w-0 flex-1 flex-col">
          <main className="flex min-h-0 flex-1 bg-white">
            <Contents />
            <span className="w-1.5 shrink-0" />
            <BookPage />
            <PageScrollbar />
          </main>
          <ReaderFooter />
        </div>
      </div>
      <Downloads />
      <Taskbar />
    </div>
  );
}
